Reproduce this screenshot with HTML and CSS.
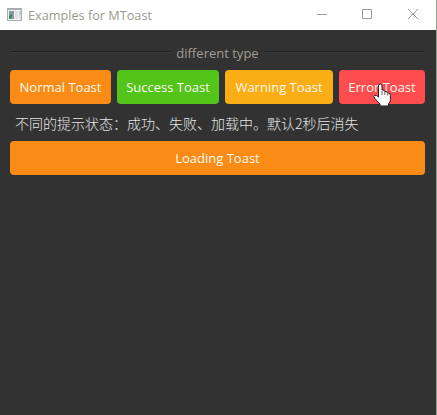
FILE: index.html
```html
<!DOCTYPE html>
<html lang="en">
<head>
<meta charset="utf-8">
<title>Examples for MToast</title>
<link rel="stylesheet" href="styles.css">
</head>
<body>
<div class="window">
  <header class="titlebar">
    <svg class="app-icon" width="15" height="13" viewBox="0 0 15 13">
      <rect width="15" height="13" fill="#a5adb0"/>
      <rect x="1" y="2" width="13" height="10" fill="#f1f3f3"/>
      <rect x="2" y="3" width="5" height="8" fill="#839ba8"/>
      <path d="M2 11V8l3-2v3l-2 2z" fill="#43834c"/>
      <rect x="8" y="3" width="3" height="8" fill="#dedfdf"/>
      <rect x="12" y="3" width="2" height="4" fill="#b4ced8"/>
      <rect x="12" y="7" width="2" height="4" fill="#dedfdf"/>
    </svg>
    <span class="title">Examples for MToast</span>
    <svg class="controls" width="102" height="12" viewBox="0 0 102 12" fill="none" stroke="#969c8f">
      <path d="M0 6.500h10M45.500 1.500h9v9h-9z"/>
      <path d="M91 1l10 10M101 1L91 11"/>
    </svg>
  </header>
  <main class="content">
    <div class="divider"><span class="divider-text">different type</span></div>
    <div class="buttons">
      <button class="btn normal"><span>Normal Toast</span></button>
      <button class="btn success"><span>Success Toast</span></button>
      <button class="btn warning"><span>Warning Toast</span></button>
      <button class="btn error"><span>Error Toast</span></button>
    </div>
    <p class="note">不同的提示状态：成功、失败、加载中。默认2秒后消失</p>
    <button class="btn normal loading"><span>Loading Toast</span></button>
  </main>
  <svg class="cursor" width="18" height="24" viewBox="0 0 18 24">
    <path d="M5.500 14V3Q5.500 1 7.200 1T9 3V7Q11.500 6.500 11.800 8.500Q14.300 8 14.600 10Q17.400 9.500 17.400 12.500V16.500Q17.400 19 15.500 21V23H7V21L1.800 15.500Q0 13 1.600 12.300Q3.300 11.800 5.500 14Z" fill="#fff" stroke="#202126"/>
    <path d="M9 8v4M11.800 9v3M14.600 10.500v2" fill="none" stroke="#202126" stroke-width=".7"/>
  </svg>
</div>
</body>
</html>
```
FILE: styles.css
```css
* { box-sizing: border-box; }
body { margin: 0; }
.window {
  position: relative;
  width: 437px;
  height: 415px;
  background: #323232;
  border-right: 1px solid #999b99;
  font-family: "Open Sans", "Noto Sans CJK SC", sans-serif;
  font-size: 13px;
  overflow: hidden;
}
.titlebar {
  display: flex;
  align-items: center;
  height: 30px;
  padding: 0 17px 2px 7px;
  background: #fff;
}
.title {
  margin: 2px 0 0 6px;
  color: #969c8f;
  font-size: 12.700px;
  line-height: 20px;
  white-space: nowrap;
}
.controls { margin-left: auto; }
.content {
  display: flex;
  flex-direction: column;
  padding: 13px 11px 0 10px;
}
.divider {
  display: flex;
  align-items: center;
  height: 20px;
  gap: 6px;
  color: #a19c96;
}
.divider::before, .divider::after {
  content: "";
  flex: 1;
  height: 2px;
  margin-bottom: 2px;
  background: linear-gradient(#202020 50%, #3b3b3b 50%);
}
.divider-text { line-height: 20px; white-space: nowrap; }
.buttons {
  display: grid;
  grid-template-columns: 101px 102px 108px 86px;
  gap: 6px;
  margin-top: 7px;
}
.btn {
  height: 34px;
  padding: 0;
  border: 0;
  border-radius: 4px;
  color: #fff8ee;
  font: 400 13px/20px "Open Sans", sans-serif;
  white-space: nowrap;
}
.normal { background: #fa8c16; }
.success { background: #52c41a; }
.warning { background: #faad14; }
.error { background: #ff4d4f; }
.note {
  height: 37px;
  margin: 0;
  padding-left: 5px;
  color: #e4e4e4;
  font-family: "Noto Sans CJK SC", sans-serif;
  font-size: 14px;
  font-weight: 300;
  line-height: 39px;
  white-space: nowrap;
}
.cursor { position: absolute; left: 373px; top: 83px; }
```
